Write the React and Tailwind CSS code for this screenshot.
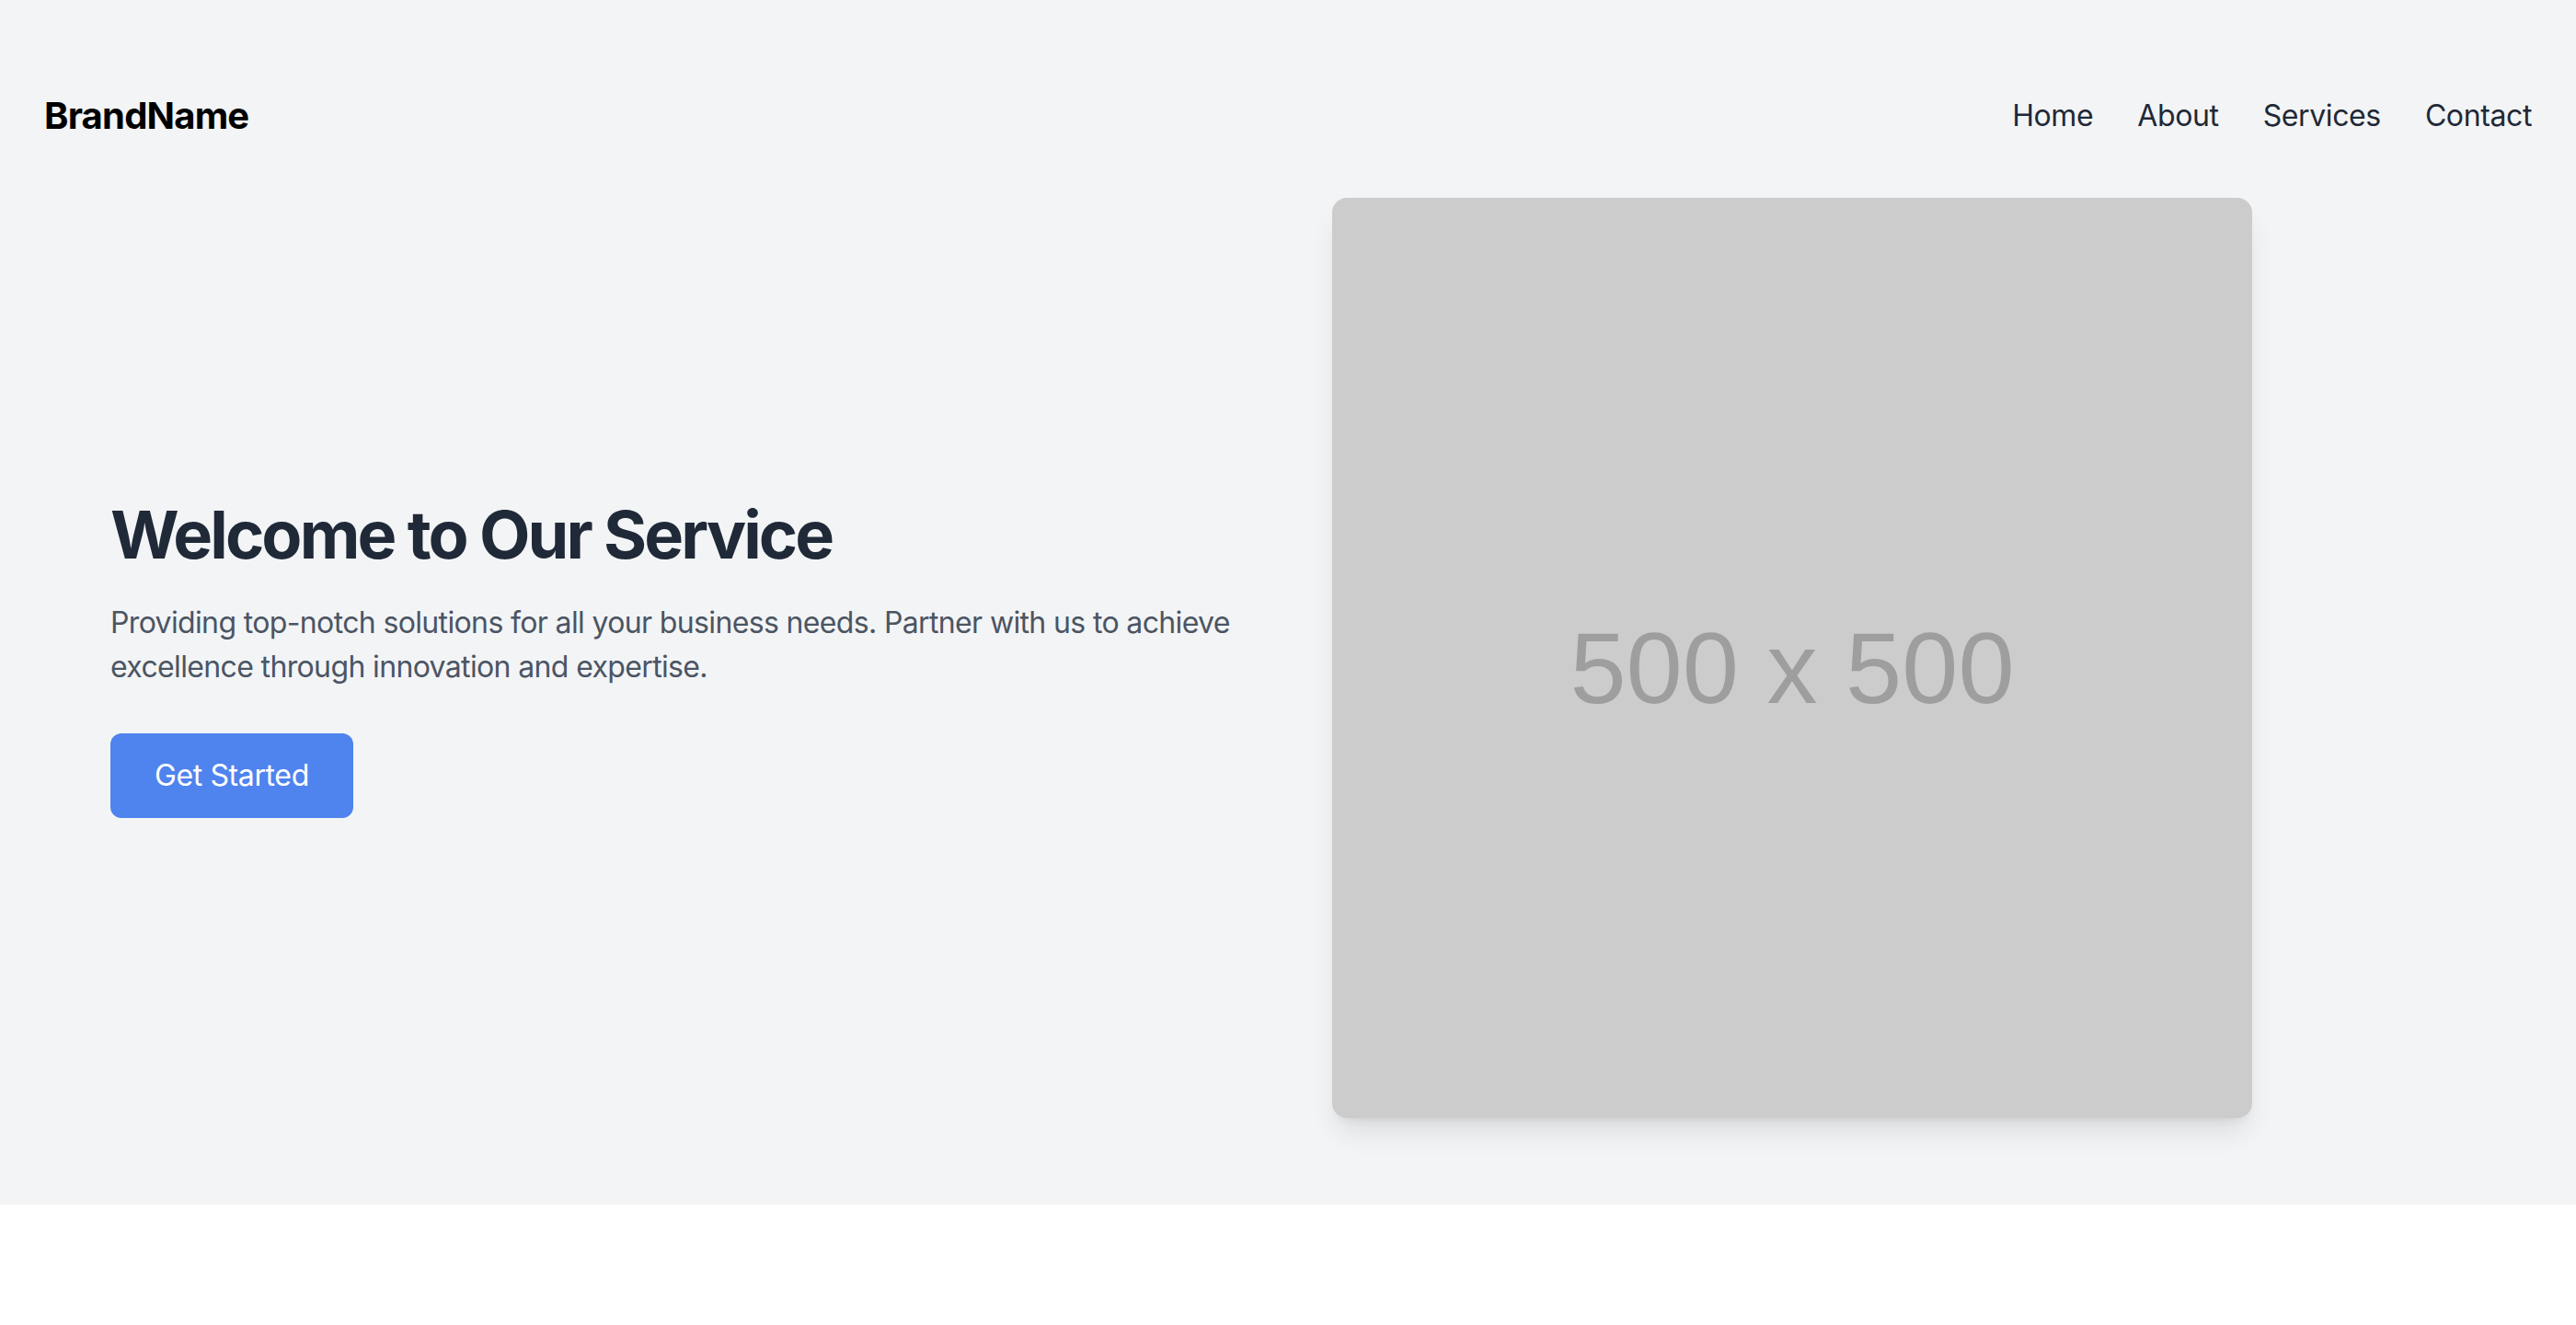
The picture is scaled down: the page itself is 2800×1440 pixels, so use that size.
import React from 'react';

const navLinks = ['Home', 'About', 'Services', 'Contact'];

const Header = () => (
  <header className="flex items-center justify-between px-12 pt-24">
    <span className="text-[40px] leading-[56px] font-bold text-black tracking-[-0.02em] pt-[2px]">
      BrandName
    </span>
    <nav className="flex items-center gap-12">
      {navLinks.map((link) => (
        <a
          key={link}
          href="#"
          className="text-[32px] leading-[48px] text-[#1f2937] tracking-[-0.012em] pt-[2px]"
        >
          {link}
        </a>
      ))}
    </nav>
  </header>
);

const Placeholder = () => (
  <div className="w-[1000px] h-[1000px] rounded-[16px] bg-[#cccccc] flex items-center justify-center pt-[22px] shadow-[0_20px_30px_-6px_rgba(0,0,0,0.1),0_8px_12px_-8px_rgba(0,0,0,0.1)]">
    <span
      className="text-[110px] leading-none text-[#9e9e9e]"
      style={{ fontFamily: '"Liberation Sans", Arial, sans-serif' }}
    >
      500 x 500
    </span>
  </div>
);

export default function App() {
  return (
    <div style={{ fontFamily: 'Inter, "Noto Sans", sans-serif' }}>
      <section className="bg-[#f3f4f6] pb-[94px]">
        <Header />
        <div className="w-[2560px] mx-auto mt-[61px] flex items-center">
          <div className="w-1/2 pr-10">
            <h1 className="text-[72px] leading-[80px] font-bold text-[#1f2937] tracking-[-0.04em] mb-8">
              Welcome to Our Service
            </h1>
            <p className="text-[32px] leading-[48px] text-[#4b5563] tracking-[-0.02em] mb-12">
              Providing top-notch solutions for all your business needs. Partner with us to achieve
              excellence through innovation and expertise.
            </p>
            <button
              type="button"
              className="bg-[#4f83ee] text-white text-[32px] leading-[48px] tracking-[-0.012em] px-12 py-[22px] rounded-[12px]"
            >
              Get Started
            </button>
          </div>
          <div className="w-1/2 pl-12">
            <Placeholder />
          </div>
        </div>
      </section>
    </div>
  );
}
